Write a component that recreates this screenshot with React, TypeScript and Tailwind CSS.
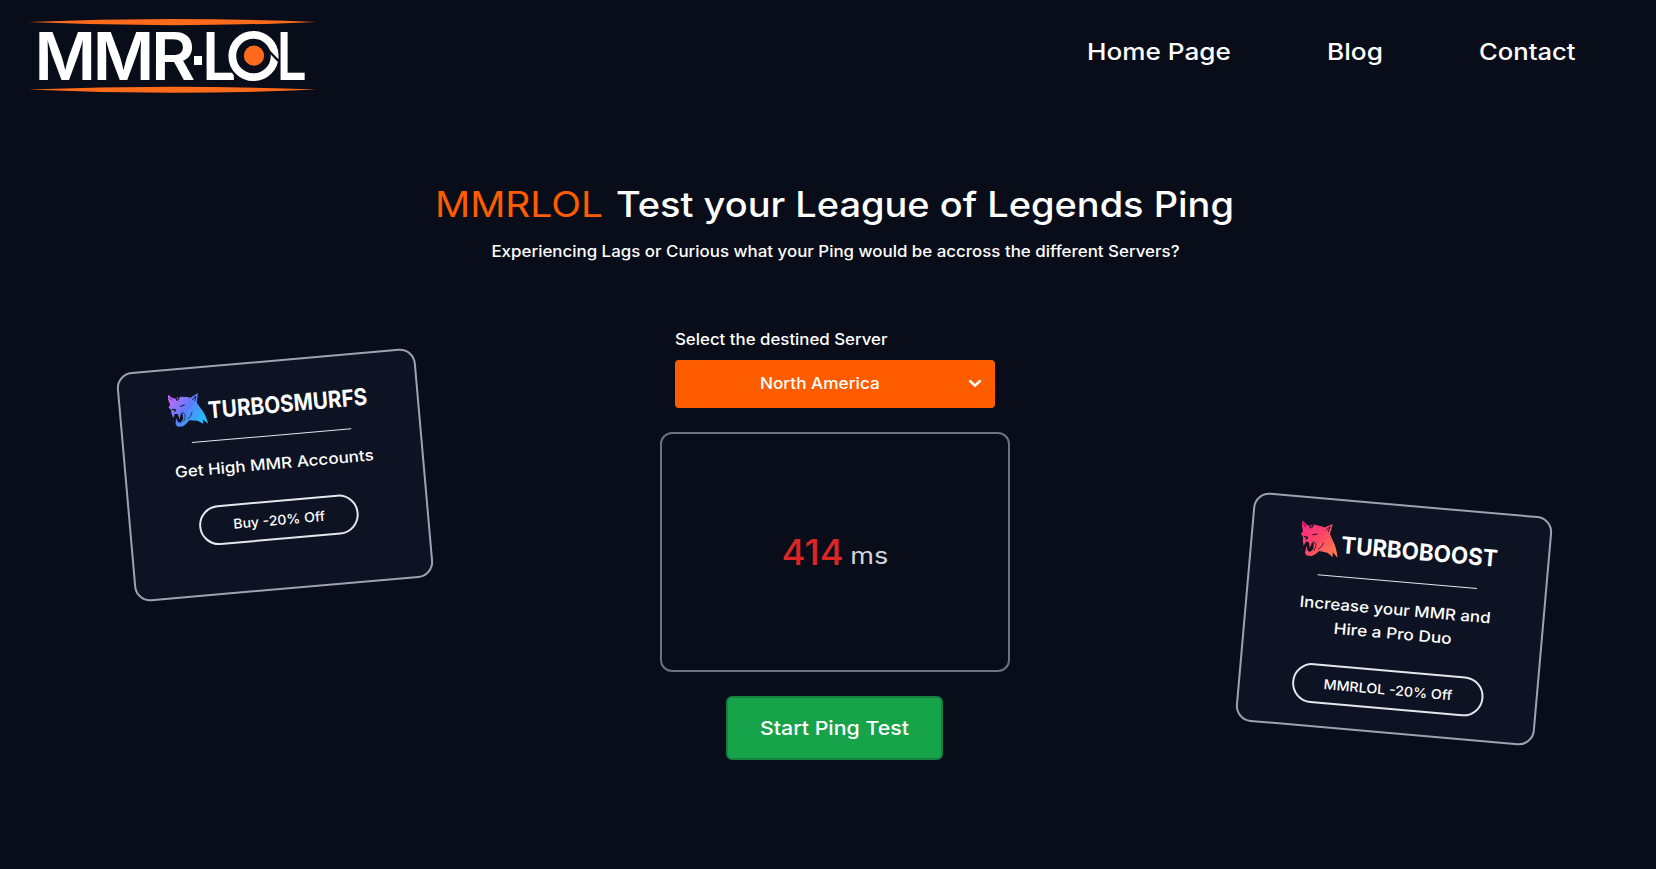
import { useId } from "react";
import type { ReactNode } from "react";

function Stretch({ className, children }: { className: string; children: ReactNode }) {
  return <span className={`inline-block whitespace-nowrap ${className}`}>{children}</span>;
}

function BrandLogo() {
  return (
    <svg width="290" height="76" viewBox="27 18 290 76" className="block overflow-visible" fontFamily="Inter, sans-serif" fontWeight="600" fontSize="65.3" fill="#fff">
      <path d="M28 22Q100 19 172 19T316 22Q244 25.2 172 25.2T28 22Z" fill="#ff6b1a" />
      <path d="M28 89.5Q100 86.8 172 86.8T316 89.5Q244 92.8 172 92.8T28 89.5Z" fill="#ff6b1a" />
      <text x="34.5" y="79.7" textLength="61.5" lengthAdjust="spacingAndGlyphs">M</text>
      <text x="92.8" y="79.7" textLength="61.5" lengthAdjust="spacingAndGlyphs">M</text>
      <text x="151" y="79.7" textLength="44.5" lengthAdjust="spacingAndGlyphs">R</text>
      <rect x="194" y="56" width="8" height="9" />
      <text x="202.2" y="79.7" textLength="34" lengthAdjust="spacingAndGlyphs">L</text>
      <circle cx="253.5" cy="56" r="27.5" fill="#090d19" />
      <text x="276.8" y="79.7" textLength="30" lengthAdjust="spacingAndGlyphs">L</text>
      <circle cx="253.5" cy="56" r="21.2" fill="none" stroke="#fff" strokeWidth="7.8" />
      <path d="M267 49L278.5 61" stroke="#090d19" strokeWidth="2.4" />
      <circle cx="254" cy="55.7" r="10.1" fill="#ff6b1a" />
    </svg>
  );
}

function Wolf({ from, mid, to, className }: { from: string; mid: string; to: string; className: string }) {
  const id = useId();
  return (
    <svg viewBox="-100.5 -89.5 38.5 34" preserveAspectRatio="none" className={className}>
      <defs>
        <linearGradient id={id} gradientUnits="userSpaceOnUse" x1="208" y1="200" x2="310" y2="275">
          <stop offset="0.05" stopColor={from} />
          <stop offset="0.5" stopColor={mid} />
          <stop offset="1" stopColor={to} />
        </linearGradient>
      </defs>
      <g transform="rotate(5) translate(-175 -144.8) scale(0.33333)">
        <path
          fill={`url(#${id})`}
          d="M205 195L221 206L232 204L240 201L262 202L271 204L293 190L290 219L299 233Q316 254 323 282L307 269L309 282L292 273L268 272L258 283L249 290L234 291L228 284L229 264L235 277L243 279L250 268L248 253L243 251L240 269L234 253L226 252L221 265L216 252L215 241L207 233L212 225Q204 210 205 195Z"
        />
        <g fill="none" stroke="#0e1323" strokeLinecap="round" strokeLinejoin="round">
          <path d="M210 204L217 211" strokeWidth="2" />
          <path d="M277 210L287 199L284 213" strokeWidth="2.4" />
          <path d="M228 205L232 212M238 203L235 209" strokeWidth="3.5" />
          <path d="M242 230L253 226" strokeWidth="3" />
          <path d="M219 239L228 240L225 245" strokeWidth="3.6" />
          <path d="M246 249Q255 250 256 257Q257 266 252 274" strokeWidth="2" />
          <path d="M276 248Q274 260 264 268" strokeWidth="2" />
        </g>
      </g>
    </svg>
  );
}

function PromoCard({ className, logo, lines, cta }: { className: string; logo: ReactNode; lines: ReactNode; cta: ReactNode }) {
  return (
    <aside className={`flex h-[230px] w-[300px] shrink-0 flex-col items-center rounded-2xl border-2 border-[#9ca3af] bg-[#0e1323] ${className}`}>
      {logo}
      <hr className="w-40 shrink-0 border-t border-[#e5e7eb]" />
      <div className="mt-4 flex flex-col items-center text-[15.45px] leading-6">{lines}</div>
      <button className="mt-6 flex h-10 items-center rounded-full border-2 border-[#e5e7eb] px-[30px] text-[13.5px] leading-5 font-medium">{cta}</button>
    </aside>
  );
}

export default function App() {
  return (
    <div className="flex h-[869px] w-full flex-col overflow-hidden bg-[#090d19] font-['Inter',sans-serif] font-medium text-white">
      <header className="flex h-[104px] items-start justify-between pl-[27px] pr-[80px]">
        <a className="pt-[18px]" aria-label="MMR LOL">
          <BrandLogo />
        </a>
        <nav className="flex pt-9 text-[23.2px] leading-8">
          <a className="w-[239.5px]"><Stretch className="origin-left scale-x-[1.127]">Home Page</Stretch></a>
          <a className="w-[152.5px]"><Stretch className="origin-left scale-x-[1.13]">Blog</Stretch></a>
          <a className="w-[97px]"><Stretch className="origin-left scale-x-[1.104]">Contact</Stretch></a>
        </nav>
      </header>

      <main className="flex flex-1 flex-col items-center pt-[80px] pl-[14px]">
        <h1 className="flex w-[800px] text-[34.8px] leading-10">
          <span className="w-[181px] font-normal text-[#ff5c00]">
            <Stretch className="origin-left scale-x-[1.118]">MMRLOL</Stretch>
          </span>
          <Stretch className="origin-left scale-x-[1.091]">Test your League of Legends Ping</Stretch>
        </h1>
        <p className="mt-4 text-[15.45px] leading-6">
          <Stretch className="scale-x-[1.094]">Experiencing Lags or Curious what your Ping would be accross the different Servers?</Stretch>
        </p>

        <div className="mt-16 flex w-full items-start justify-between pr-[112px] pl-[111px]">
          <PromoCard
            className="mt-8 -rotate-5"
            logo={
              <div className="flex h-[72.5px] w-[202px] shrink-0 items-start justify-between pt-[23px]">
                <Wolf from="#c26bfa" mid="#5b7cfa" to="#22c3fb" className="h-[34px] w-[39.5px]" />
                <span className="w-[162px] pt-1.5 text-[23.2px] leading-7 font-bold">
                  <Stretch className="origin-left scale-x-[0.893]">TURBOSMURFS</Stretch>
                </span>
              </div>
            }
            lines={<Stretch className="scale-x-[1.104]">Get High MMR Accounts</Stretch>}
            cta={<span className="flex w-24 justify-center"><Stretch className="scale-x-[1.042]">Buy -20% Off</Stretch></span>}
          />

          <section className="flex w-[350px] flex-col items-center">
            <label className="w-80 text-[15.45px] leading-6">
              <Stretch className="origin-left scale-x-[1.09]">Select the destined Server</Stretch>
            </label>
            <div className="mt-2 grid h-12 w-80 grid-cols-[1fr_auto_1fr] items-center rounded bg-[#ff5c00] text-[15.45px] leading-6">
              <Stretch className="col-start-2 -ml-8 w-[106px] scale-x-[1.115]">North America</Stretch>
              <svg width="14" height="9" viewBox="0 0 14 9" className="mr-[13px] -mt-0.5 justify-self-end" fill="none" stroke="#fff" strokeWidth="2.5" strokeLinecap="round">
                <path d="M2 2L7 6.6L12 2" />
              </svg>
            </div>
            <div className="mt-6 flex h-60 w-full items-center justify-center rounded-xl border-2 border-[#6b7280] pt-1">
              <p className="flex items-baseline gap-[11px] pr-px leading-10">
                <Stretch className="scale-x-[1.05] text-[34.8px] text-[#dc2626]">414</Stretch>
                <Stretch className="relative -top-px scale-x-[1.17] text-[23.2px] font-normal text-[#d1d5db]">ms</Stretch>
              </p>
            </div>
            <button className="mt-6 flex h-16 w-[217px] items-center justify-center rounded-md border-2 border-[#15803d] bg-[#16a34a] text-[19.3px] leading-7 font-medium">
              <Stretch className="scale-x-[1.105]">Start Ping Test</Stretch>
            </button>
          </section>

          <PromoCard
            className="mt-44 rotate-5"
            logo={
              <div className="flex h-[74.5px] w-[202px] shrink-0 items-start justify-between pr-0.5 pt-[22px]">
                <Wolf from="#ff2a7c" mid="#fb4668" to="#ff7a50" className="h-[36px] w-10" />
                <span className="w-[158px] pt-2 text-[23.2px] leading-7 font-bold">
                  <Stretch className="origin-left scale-x-[0.965]">TURBOBOOST</Stretch>
                </span>
              </div>
            }
            lines={
              <>
                <Stretch className="scale-x-[1.097]">Increase your MMR and</Stretch>
                <Stretch className="scale-x-[1.118]">Hire a Pro Duo</Stretch>
              </>
            }
            cta={<span className="flex w-32 justify-center"><Stretch className="scale-x-[1.056]">MMRLOL -20% Off</Stretch></span>}
          />
        </div>
      </main>
    </div>
  );
}
